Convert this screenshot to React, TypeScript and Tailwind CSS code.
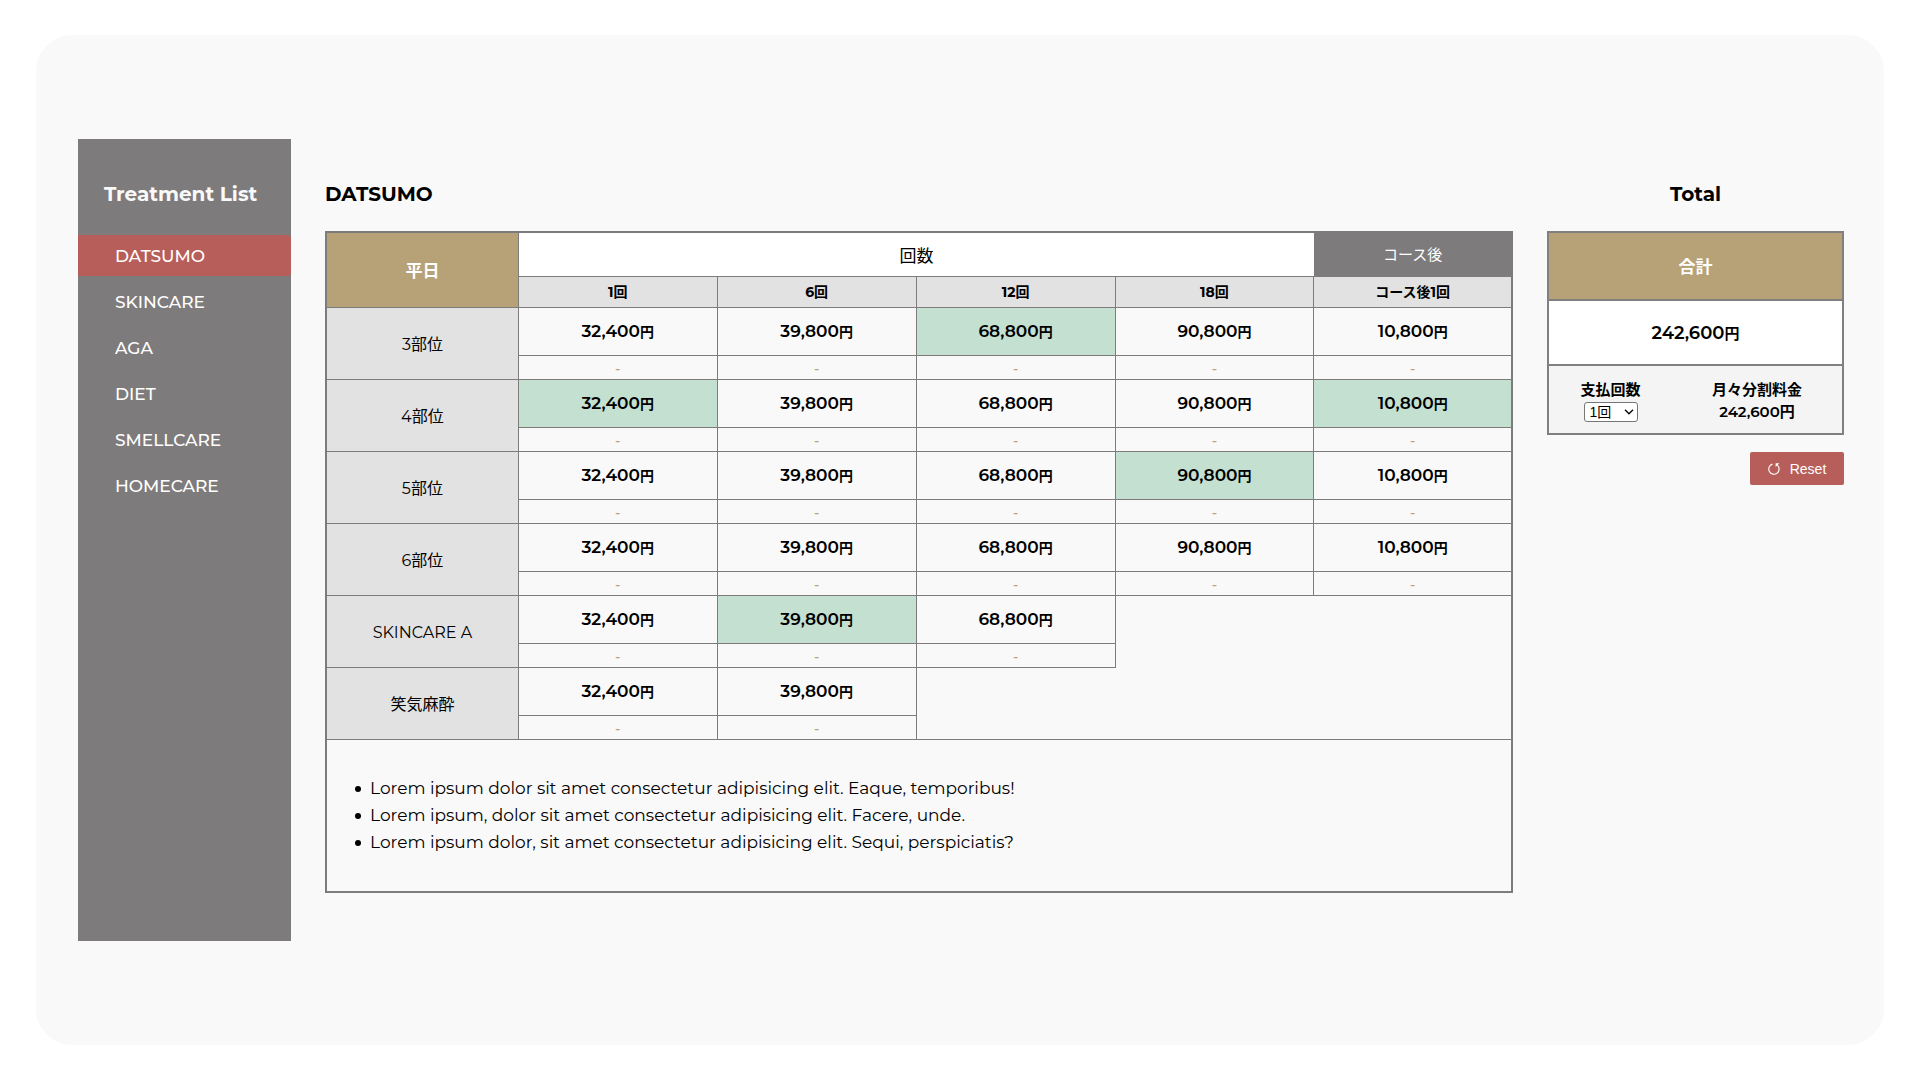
import { useState } from "react";
import clsx from "clsx";

const MENU = ["DATSUMO", "SKINCARE", "AGA", "DIET", "SMELLCARE", "HOMECARE"];
const COUNTS = ["1回", "6回", "12回", "18回", "コース後1回"];
const PRICES = [32400, 39800, 68800, 90800, 10800];
const ROWS = [
  { name: "3部位", cells: 5 },
  { name: "4部位", cells: 5 },
  { name: "5部位", cells: 5 },
  { name: "6部位", cells: 5 },
  { name: "SKINCARE A", cells: 3 },
  { name: "笑気麻酔", cells: 2 },
];
const NOTES = [
  "Lorem ipsum dolor sit amet consectetur adipisicing elit. Eaque, temporibus!",
  "Lorem ipsum, dolor sit amet consectetur adipisicing elit. Facere, unde.",
  "Lorem ipsum dolor, sit amet consectetur adipisicing elit. Sequi, perspiciatis?",
];
const PAYMENTS = [1, 3, 6, 12, 24];

const format = (n: number) => n.toLocaleString("en-US");

function ResetIcon() {
  return (
    <svg viewBox="0 0 12 12" className="h-3 w-3" fill="none" stroke="currentColor" aria-hidden="true">
      <path d="M4.4 1.1A5.2 5.2 0 1 0 9.3 2.1" strokeWidth="1.1" />
      <path d="M7.6.3h3.8L7.6 4z" fill="currentColor" stroke="none" />
    </svg>
  );
}

function Sidebar({ active, onSelect }: { active: string; onSelect: (name: string) => void }) {
  return (
    <nav className="w-[213px] shrink-0 bg-[#7e7b7c] pt-[43px] text-white" aria-label="Treatment List">
      <h2 className="pl-[26px] text-xl leading-6 font-bold text-[#f9f9f9]">Treatment List</h2>
      <ul className="mt-[29px] flex flex-col gap-[5px]">
        {MENU.map((name) => (
          <li key={name}>
            <button
              type="button"
              onClick={() => onSelect(name)}
              className={clsx(
                "block h-[41px] w-full rounded-r pt-0.5 pl-[37px] text-left text-[17px] font-medium",
                name === active && "bg-[#b85e5a]",
              )}
            >
              {name}
            </button>
          </li>
        ))}
      </ul>
    </nav>
  );
}

function PriceTable({ selected, onToggle }: { selected: string[]; onToggle: (key: string) => void }) {
  return (
    <table className="w-full table-fixed border-separate border-spacing-0 text-center">
      <colgroup>
        <col className="w-[16.2%]" />
        <col className="w-[16.8%]" />
        <col className="w-[16.8%]" />
        <col className="w-[16.8%]" />
        <col className="w-[16.8%]" />
        <col />
      </colgroup>
      <thead>
        <tr>
          <th rowSpan={2} className="border-r border-b border-[#7e7b7c] bg-[#b7a177] p-0 pt-1 text-[17px] font-bold text-white">
            平日
          </th>
          <th colSpan={4} className="h-11 border-b border-[#7e7b7c] bg-white p-0 pt-1 text-[17px] font-normal">
            回数
          </th>
          <th className="border-b border-[#7e7b7c] bg-[#7e7b7c] p-0 pt-0.5 text-[15px] font-normal text-white">コース後</th>
        </tr>
        <tr>
          {COUNTS.map((c, i) => (
            <th
              key={c}
              className={clsx(
                "h-[31px] border-b border-[#7e7b7c] bg-[#e2e2e2] p-0 text-[14px] leading-5 font-bold",
                i < 4 && "border-r",
              )}
            >
              {c}
            </th>
          ))}
        </tr>
      </thead>
      {ROWS.map((row, r) => {
        const empty = COUNTS.length - row.cells;
        const last = r === ROWS.length - 1;
        return (
          <tbody key={row.name}>
            <tr>
              <th
                rowSpan={2}
                scope="rowgroup"
                className="border-r border-b border-[#7e7b7c] bg-[#e2e2e2] p-0 pt-0.5 text-[16px] leading-6 font-normal"
              >
                {row.name}
              </th>
              {PRICES.slice(0, row.cells).map((price, c) => {
                const key = `${r}-${c}`;
                const on = selected.includes(key);
                return (
                  <td key={key} className={clsx("h-12 border-b border-[#7e7b7c] p-0", c < 4 && "border-r")}>
                    <button
                      type="button"
                      aria-pressed={on}
                      onClick={() => onToggle(key)}
                      className={clsx("block h-[47px] w-full pt-px text-[17px] font-semibold", on && "bg-[#c3e0d1]")}
                    >
                      {format(price)}
                      <span className="text-sm">円</span>
                    </button>
                  </td>
                );
              })}
              {empty > 0 && (
                <td rowSpan={2} colSpan={empty} className={clsx("p-0", last && "border-b border-[#7e7b7c]")} />
              )}
            </tr>
            <tr>
              {PRICES.slice(0, row.cells).map((_, c) => (
                <td
                  key={c}
                  className={clsx(
                    "h-6 border-b border-[#7e7b7c] p-0 pt-0.5 text-sm leading-5 font-medium text-[#b7a177]",
                    c < 4 && "border-r",
                  )}
                >
                  -
                </td>
              ))}
            </tr>
          </tbody>
        );
      })}
    </table>
  );
}

export default function App() {
  const [active, setActive] = useState("DATSUMO");
  const [selected, setSelected] = useState(["0-2", "1-0", "1-4", "2-3", "4-1"]);
  const [payments, setPayments] = useState(1);

  const toggle = (key: string) =>
    setSelected((s) => (s.includes(key) ? s.filter((k) => k !== key) : [...s, key]));
  const total = selected.reduce((sum, key) => sum + PRICES[Number(key.split("-")[1])], 0);

  return (
    <div className="flex min-h-screen bg-white px-9 py-[35px] font-['Montserrat','Inter','Noto_Sans_CJK_JP',sans-serif] text-black">
      <div className="flex flex-1 items-center rounded-[36px] bg-[#f9f9f9] pr-10 pl-[42px]">
        <div className="flex min-w-0 flex-1 gap-[34px]">
          <Sidebar active={active} onSelect={setActive} />

          <main className="min-w-0 flex-1 pt-[43px] pb-12">
            <h1 className="text-xl leading-6 font-bold">{active}</h1>
            <div className="mt-[25px] border-2 border-[#7e7b7c]">
              <PriceTable selected={selected} onToggle={toggle} />
              <ul className="py-[35px] pl-7 text-[17px] leading-[27px]">
                {NOTES.map((note) => (
                  <li
                    key={note}
                    className="flex items-center gap-[9px] before:h-1.5 before:w-1.5 before:shrink-0 before:rounded-full before:bg-black"
                  >
                    {note}
                  </li>
                ))}
              </ul>
            </div>
          </main>

          <aside className="w-[297px] shrink-0 pt-[43px]">
            <h2 className="text-center text-xl leading-6 font-bold">Total</h2>
            <div className="mt-[25px] border-2 border-[#808080] text-center">
              <h3 className="flex h-[66px] items-center justify-center bg-[#b7a177] pt-1 text-[17px] font-bold text-white">
                合計
              </h3>
              <p className="flex h-[67px] items-center justify-center border-y-2 border-[#808080] bg-white text-lg font-semibold">
                <span>
                  {format(total)}
                  <span className="text-[15px]">円</span>
                </span>
              </p>
              <div className="grid h-[67px] grid-cols-[123px_1fr] items-center bg-[#f4f4f4] pt-0.5 text-[15px] leading-[22px] font-semibold">
                <div className="flex flex-col items-center">
                  <label htmlFor="payments" className="font-bold">
                    支払回数
                  </label>
                  <span className="relative flex h-[22px] items-center">
                    <select
                      id="payments"
                      value={payments}
                      onChange={(e) => setPayments(Number(e.target.value))}
                      className="h-5 w-[54px] appearance-none rounded-[3px] border border-[#767676] bg-white pl-[5px] font-['Liberation_Sans','Noto_Sans_CJK_JP',sans-serif] text-sm leading-[18px] font-normal"
                    >
                      {PAYMENTS.map((n) => (
                        <option key={n} value={n}>
                          {n}回
                        </option>
                      ))}
                    </select>
                    <svg
                      viewBox="0 0 10 6"
                      className="pointer-events-none absolute right-1 h-1.5 w-2.5"
                      fill="none"
                      stroke="currentColor"
                      strokeWidth="1.3"
                      aria-hidden="true"
                    >
                      <path d="M1 .8 5 4.8 9 .8" />
                    </svg>
                  </span>
                </div>
                <div>
                  <p className="font-bold">月々分割料金</p>
                  <p>{format(Math.ceil(total / payments))}円</p>
                </div>
              </div>
            </div>
            <div className="mt-[17px] flex justify-end">
              <button
                type="button"
                onClick={() => setSelected([])}
                className="flex h-[33px] w-[94px] items-center justify-center gap-2.5 rounded-[2px] bg-[#b85e5a] font-['Liberation_Sans',sans-serif] text-sm text-white"
              >
                <ResetIcon />
                Reset
              </button>
            </div>
          </aside>
        </div>
      </div>
    </div>
  );
}
